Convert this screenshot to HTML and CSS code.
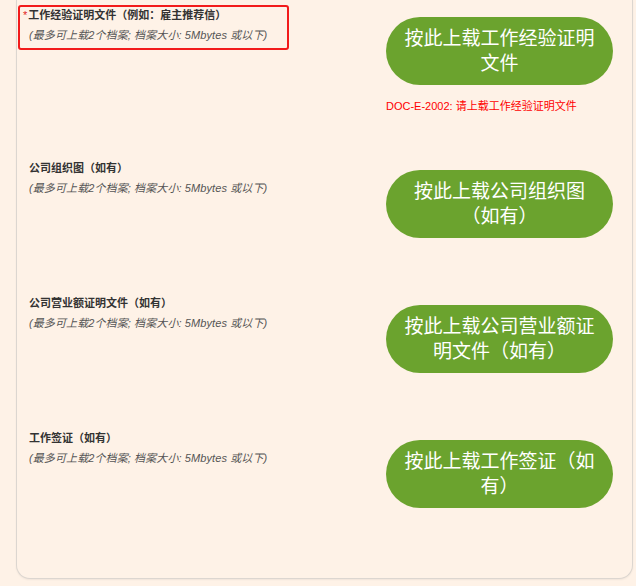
FILE: index.html
```html
<html>
  <head>
    <title>上载文件</title>
    <link rel="stylesheet" href="styles.css">
  </head>
  <body>
    <div class="card">
      <div class="field has-error">
        <div class="label-box invalid">
          <div class="label"><span class="req">*</span>工作经验证明文件（例如：雇主推荐信）</div>
          <div class="hint">(最多可上载2个档案; 档案大小: 5Mbytes 或以下)</div>
        </div>
        <div class="upload">
          <button class="upload-btn">按此上载工作经验证明文件</button>
          <div class="error">DOC-E-2002: 请上载工作经验证明文件</div>
        </div>
      </div>

      <div class="field">
        <div class="label-box">
          <div class="label">公司组织图（如有）</div>
          <div class="hint">(最多可上载2个档案; 档案大小: 5Mbytes 或以下)</div>
        </div>
        <div class="upload">
          <button class="upload-btn">按此上载公司组织图（如有）</button>
        </div>
      </div>

      <div class="field">
        <div class="label-box">
          <div class="label">公司营业额证明文件（如有）</div>
          <div class="hint">(最多可上载2个档案; 档案大小: 5Mbytes 或以下)</div>
        </div>
        <div class="upload">
          <button class="upload-btn">按此上载公司营业额证明文件（如有）</button>
        </div>
      </div>

      <div class="field last">
        <div class="label-box">
          <div class="label">工作签证（如有）</div>
          <div class="hint">(最多可上载2个档案; 档案大小: 5Mbytes 或以下)</div>
        </div>
        <div class="upload">
          <button class="upload-btn">按此上载工作签证（如有）</button>
        </div>
      </div>
    </div>
  </body>
</html>
```

FILE: styles.css
```css
body {
  margin: 0;
  background: #fef2e7;
  font-family: "Liberation Sans", "Noto Sans CJK SC", sans-serif;
  color: #333;
}

.card {
  margin: 0 3px 8px 16px;
  padding: 5px 0 11px 1px;
  border: 1px solid #dcd6d0;
  border-top: none;
  border-radius: 0 0 14px 14px;
  box-shadow: 0 1px 2px rgba(0, 0, 0, 0.06);
  background: #fef2e7;
}

.field {
  display: flex;
  align-items: flex-start;
  padding-bottom: 55px;
}

.field.has-error {
  padding-bottom: 45px;
}

.field.last {
  padding-bottom: 59px;
}

.label-box {
  width: 271px;
  box-sizing: border-box;
  padding: 0 4px 5px 9px;
  border: 2px solid transparent;
  border-radius: 3px;
}

.label-box.invalid {
  border-color: #f21b1b;
}

.label {
  font-size: 11px;
  font-weight: bold;
  line-height: 16px;
  color: #333;
  white-space: nowrap;
}

.req {
  color: #e21b1b;
  font-weight: normal;
  margin-left: -6px;
  margin-right: 1px;
}

.hint {
  margin-top: 4px;
  font-size: 11px;
  line-height: 16px;
  font-style: italic;
  color: #555;
  letter-spacing: 0.1px;
  white-space: nowrap;
}

.upload {
  margin-left: auto;
  margin-right: 19px;
  width: 227px;
  padding-top: 12px;
}

.upload-btn {
  display: block;
  width: 227px;
  height: 68px;
  padding: 0 10px;
  border: none;
  border-radius: 34px;
  background: #6ba32e;
  color: #fff;
  font-family: "Liberation Sans", "Noto Sans CJK SC", sans-serif;
  font-size: 19px;
  line-height: 25px;
  text-align: center;
}

button:hover {
  cursor: pointer;
}

.error {
  margin-top: 14px;
  font-size: 11px;
  line-height: 14px;
  color: #f00;
  white-space: nowrap;
}
```
